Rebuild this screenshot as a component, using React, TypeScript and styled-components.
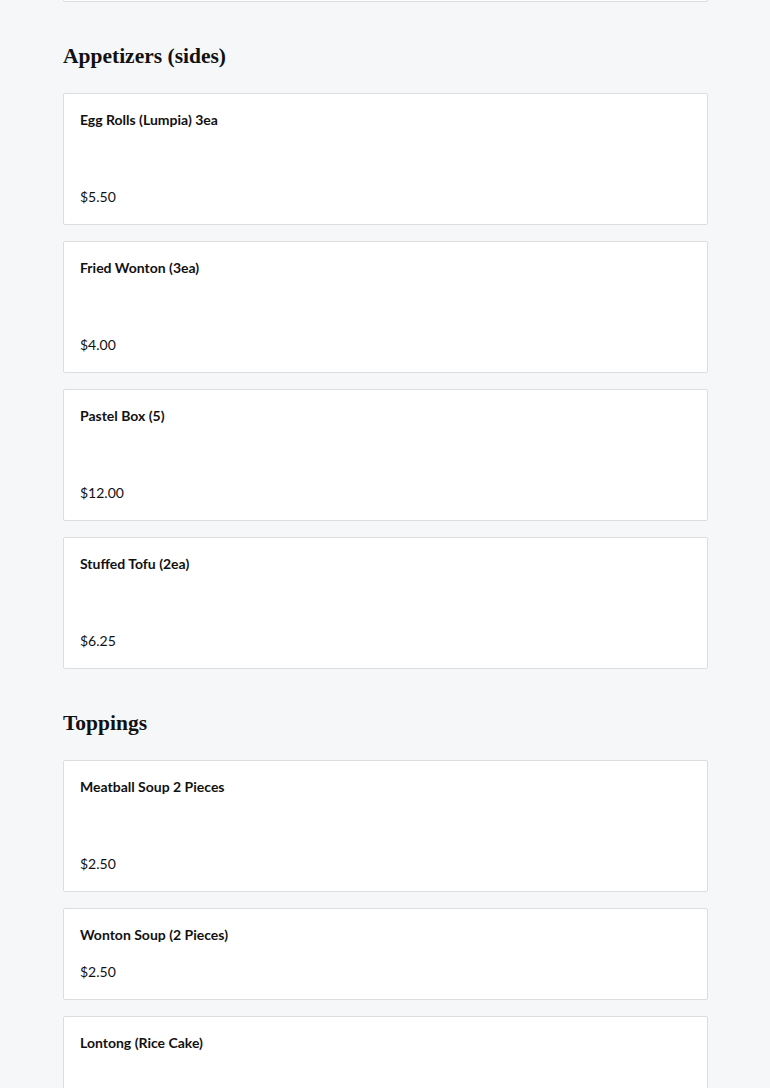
import React from "react";
import styled, { createGlobalStyle } from "styled-components";

type Item = {
  name: string;
  price: string;
  tall?: boolean;
};

type Section = {
  title: string;
  items: Item[];
};

const sections: Section[] = [
  {
    title: "Appetizers (sides)",
    items: [
      { name: "Egg Rolls (Lumpia) 3ea", price: "$5.50", tall: true },
      { name: "Fried Wonton (3ea)", price: "$4.00", tall: true },
      { name: "Pastel Box (5)", price: "$12.00", tall: true },
      { name: "Stuffed Tofu (2ea)", price: "$6.25", tall: true },
    ],
  },
  {
    title: "Toppings",
    items: [
      { name: "Meatball Soup 2 Pieces", price: "$2.50", tall: true },
      { name: "Wonton Soup (2 Pieces)", price: "$2.50" },
      { name: "Lontong (Rice Cake)", price: "$2.50", tall: true },
    ],
  },
];

const GlobalStyle = createGlobalStyle`
  body {
    margin: 0;
    background: #f6f7f9;
    font-family: Lato, "Open Sans", sans-serif;
    color: #111;
    overflow: hidden;
  }
`;

const Page = styled.main`
  width: 645px;
  padding-left: 63px;
  margin-top: -130px;
`;

const SectionTitle = styled.h2`
  margin: 39px 0 22px;
  font-family: "Liberation Serif", serif;
  font-size: 21.5px;
  font-weight: 700;
  line-height: 30px;
  color: #111;
`;

const List = styled.div`
  display: flex;
  flex-direction: column;
  gap: 16px;
`;

const Card = styled.div`
  background: #fff;
  border: 1px solid #dcdde1;
  border-radius: 2px;
  padding: 16px;
  display: flex;
  flex-direction: column;
`;

const Name = styled.div`
  font-size: 14px;
  font-weight: 700;
  line-height: 20px;
`;

const Description = styled.div<{ $tall?: boolean }>`
  height: ${(p) => (p.$tall ? "56px" : "16px")};
`;

const Price = styled.div`
  font-size: 14px;
  line-height: 22px;
`;

const MenuCard = ({ name, price, tall }: Item) => (
  <Card>
    <Name>{name}</Name>
    <Description $tall={tall} />
    <Price>{price}</Price>
  </Card>
);

export default function App() {
  return (
    <>
      <GlobalStyle />
      <Page>
        <List>
          <MenuCard name="Nasi Goreng" price="$12.00" tall />
        </List>
        {sections.map((s) => (
          <section key={s.title}>
            <SectionTitle>{s.title}</SectionTitle>
            <List>
              {s.items.map((it) => (
                <MenuCard key={it.name} {...it} />
              ))}
            </List>
          </section>
        ))}
      </Page>
    </>
  );
}
